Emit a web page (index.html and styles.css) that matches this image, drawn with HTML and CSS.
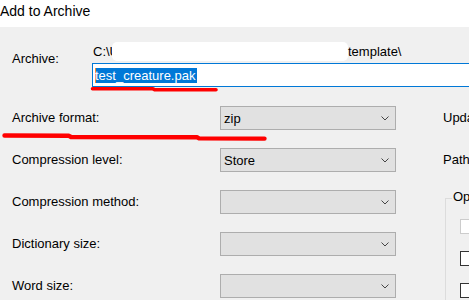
FILE: index.html
```html
<!DOCTYPE html>
<html>
<head>
<meta charset="utf-8">
<link rel="stylesheet" href="styles.css">
</head>
<body>
<div class="window">
  <div class="titlebar">Add to Archive</div>
  <div class="content">
    <div class="archive">
      <div class="archive-label">Archive:</div>
      <div class="archive-fields">
        <div class="path"><span>C:\U</span><span class="redact"></span><span>template\</span></div>
        <div class="name-input"><span class="sel">test_creature.pak</span></div>
      </div>
    </div>
    <div class="form">
      <div class="label">Archive format:</div>
      <div class="combo"><span>zip</span><svg class="chev" width="8" height="5" viewBox="0 0 8 5"><polyline points="0.5,0.5 4,4 7.5,0.5"/></svg></div>
      <div class="label right">Update mode:</div>

      <div class="label">Compression level:</div>
      <div class="combo"><span>Store</span><svg class="chev" width="8" height="5" viewBox="0 0 8 5"><polyline points="0.5,0.5 4,4 7.5,0.5"/></svg></div>
      <div class="label right">Path mode:</div>

      <div class="label">Compression method:</div>
      <div class="combo"><span></span><svg class="chev" width="8" height="5" viewBox="0 0 8 5"><polyline points="0.5,0.5 4,4 7.5,0.5"/></svg></div>
      <div class="group">
        <div class="legend">Options</div>
        <div class="checks">
          <span class="check disabled"></span>
          <span class="check"></span>
          <span class="check"></span>
        </div>
      </div>

      <div class="label">Dictionary size:</div>
      <div class="combo"><span></span><svg class="chev" width="8" height="5" viewBox="0 0 8 5"><polyline points="0.5,0.5 4,4 7.5,0.5"/></svg></div>

      <div class="label">Word size:</div>
      <div class="combo"><span></span><svg class="chev" width="8" height="5" viewBox="0 0 8 5"><polyline points="0.5,0.5 4,4 7.5,0.5"/></svg></div>
    </div>
  </div>
  <svg class="marks" width="469" height="300" viewBox="0 0 469 300">
    <path d="M92.5 88.8 L153 88.8 L155 89.8 L216 89.8" />
    <path class="thick" d="M4.5 135.5 L69 135.8 L71 137 L197 137.3 L199 138.4 L264.5 138.6" />
  </svg>
</div>
</body>
</html>
```
FILE: styles.css
```css
html, body {
  margin: 0;
  padding: 0;
}
body {
  width: 469px;
  height: 300px;
  overflow: hidden;
  background: #f0f0f0;
  font-family: "Liberation Sans", Arial, sans-serif;
  font-size: 13px;
  color: #000;
}
.window {
  position: relative;
  width: 469px;
  height: 300px;
  overflow: hidden;
}
.titlebar {
  background: #fff;
  height: 27px;
  box-sizing: border-box;
  font-size: 14px;
  line-height: 22px;
  padding-left: 0;
  white-space: nowrap;
}
.content {
  background: #f0f0f0;
}
.archive {
  display: flex;
  padding: 15px 0 0 12px;
}
.archive-label {
  width: 80px;
  flex: none;
  padding-top: 9px;
  line-height: 15px;
}
.archive-fields {
  flex: none;
  width: 420px;
  display: flex;
  flex-direction: column;
  gap: 2px;
}
.path {
  display: flex;
  align-items: center;
  height: 19px;
  line-height: 19px;
  padding-left: 1px;
  white-space: nowrap;
}
.redact {
  display: inline-block;
  width: 236px;
  height: 19px;
  margin-left: -7px;
  background: #fff;
  border-radius: 5px;
}
.name-input {
  height: 24px;
  box-sizing: border-box;
  border: 1px solid #0078d7;
  background: #fff;
  display: flex;
  align-items: center;
  padding-left: 2px;
}
.sel {
  background: #0078d7;
  color: #fff;
  line-height: 15px;
  padding-right: 2px;
  box-shadow: inset 1px 0 0 #ff8728;
}
.form {
  display: grid;
  grid-template-columns: 161px 176px 1fr;
  grid-template-rows: repeat(5, 24px);
  column-gap: 47px;
  row-gap: 18px;
  padding: 19px 0 0 12px;
}
.label {
  line-height: 24px;
  white-space: nowrap;
}
.right {
  grid-column: 3;
}
.combo {
  grid-column: 2;
  height: 24px;
  box-sizing: border-box;
  border: 1px solid #adadad;
  background: #e1e1e1;
  display: flex;
  align-items: center;
  justify-content: space-between;
  padding: 0 6px 0 3px;
  line-height: 15px;
}
.chev polyline {
  fill: none;
  stroke: #444;
  stroke-width: 1;
}
.group {
  grid-column: 3;
  grid-row: 3 / span 3;
  margin: 8px 0 -60px 2px;
  border-top: 1px solid #dcdcdc;
  border-left: 1px solid #dcdcdc;
  width: 120px;
}
.legend {
  margin: -10px 0 0 6px;
  padding: 0 1px;
  background: #f0f0f0;
  line-height: 15px;
  width: max-content;
  white-space: nowrap;
}
.checks {
  display: flex;
  flex-direction: column;
  gap: 17px;
  margin: 15px 0 0 14px;
}
.check {
  display: block;
  width: 15px;
  height: 15px;
  box-sizing: border-box;
  border: 1px solid #333;
  background: #fff;
}
.check.disabled {
  border-color: #cccccc;
}
.marks {
  position: absolute;
  left: 0;
  top: 0;
  pointer-events: none;
}
.marks path {
  fill: none;
  stroke: #ff0000;
  stroke-width: 3.6;
  stroke-linecap: round;
  stroke-linejoin: round;
}
.marks path.thick {
  stroke-width: 4.4;
}
```
